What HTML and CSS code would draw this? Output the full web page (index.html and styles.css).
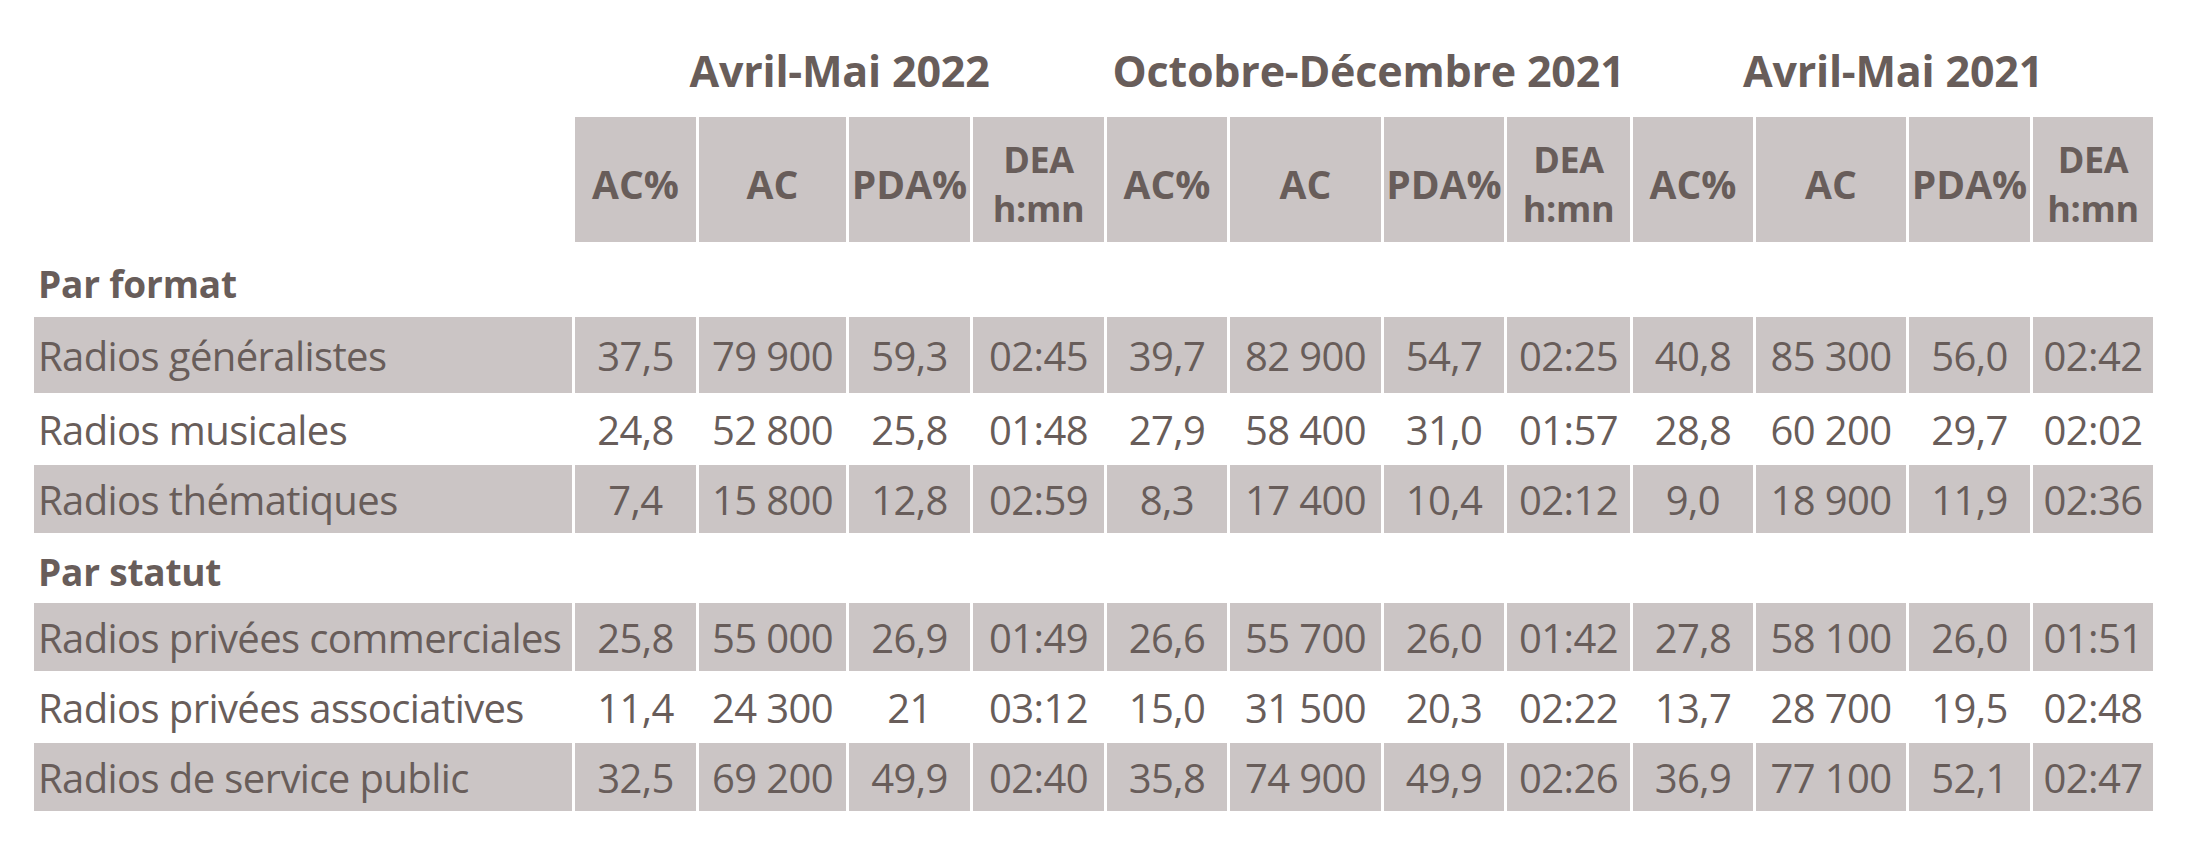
FILE: index.html
```html
<!DOCTYPE html>
<html lang="fr">
<head>
<meta charset="utf-8">
<title>Audience radio</title>
<link rel="stylesheet" href="styles.css">
</head>
<body>
<div class="sheet">
  <div class="row titles">
    <div class="lbl"></div>
    <div class="group">Avril-Mai 2022</div>
    <div class="group">Octobre-Décembre 2021</div>
    <div class="group">Avril-Mai 2021</div>
  </div>
  <div class="row head">
    <div class="blank"></div>
    <div class="hc">AC%</div><div class="hc">AC</div><div class="hc">PDA%</div><div class="hc two">DEA<br>h:mn</div>
    <div class="hc">AC%</div><div class="hc">AC</div><div class="hc">PDA%</div><div class="hc two">DEA<br>h:mn</div>
    <div class="hc">AC%</div><div class="hc">AC</div><div class="hc">PDA%</div><div class="hc two">DEA<br>h:mn</div>
  </div>
  <div class="section s1">Par format</div>
  <div class="row data shade tall">
    <div class="name">Radios généralistes</div>
    <div>37,5</div><div>79 900</div><div>59,3</div><div>02:45</div>
    <div>39,7</div><div>82 900</div><div>54,7</div><div>02:25</div>
    <div>40,8</div><div>85 300</div><div>56,0</div><div>02:42</div>
  </div>
  <div class="row data plain">
    <div class="name">Radios musicales</div>
    <div>24,8</div><div>52 800</div><div>25,8</div><div>01:48</div>
    <div>27,9</div><div>58 400</div><div>31,0</div><div>01:57</div>
    <div>28,8</div><div>60 200</div><div>29,7</div><div>02:02</div>
  </div>
  <div class="row data shade">
    <div class="name">Radios thématiques</div>
    <div>7,4</div><div>15 800</div><div>12,8</div><div>02:59</div>
    <div>8,3</div><div>17 400</div><div>10,4</div><div>02:12</div>
    <div>9,0</div><div>18 900</div><div>11,9</div><div>02:36</div>
  </div>
  <div class="section s2">Par statut</div>
  <div class="row data shade">
    <div class="name">Radios privées commerciales</div>
    <div>25,8</div><div>55 000</div><div>26,9</div><div>01:49</div>
    <div>26,6</div><div>55 700</div><div>26,0</div><div>01:42</div>
    <div>27,8</div><div>58 100</div><div>26,0</div><div>01:51</div>
  </div>
  <div class="row data plain">
    <div class="name">Radios privées associatives</div>
    <div>11,4</div><div>24 300</div><div>21</div><div>03:12</div>
    <div>15,0</div><div>31 500</div><div>20,3</div><div>02:22</div>
    <div>13,7</div><div>28 700</div><div>19,5</div><div>02:48</div>
  </div>
  <div class="row data shade">
    <div class="name">Radios de service public</div>
    <div>32,5</div><div>69 200</div><div>49,9</div><div>02:40</div>
    <div>35,8</div><div>74 900</div><div>49,9</div><div>02:26</div>
    <div>36,9</div><div>77 100</div><div>52,1</div><div>02:47</div>
  </div>
</div>
</body>
</html>
```

FILE: styles.css
```css
html, body {
  margin: 0;
  padding: 0;
  background: #ffffff;
}

body {
  font-family: "Open Sans", "Noto Sans", sans-serif;
  color: #685d5a;
}

.sheet {
  display: flex;
  flex-direction: column;
  gap: 3px;
  padding: 24px 0 0 34px;
  width: 2119px;
}

.row {
  display: grid;
  grid-template-columns: 538px 121px 147px 121px 131px 120px 151px 120px 123px 120px 150px 121px 120px;
  column-gap: 3px;
}

.titles {
  height: 90px;
}

.titles .group {
  grid-column: span 4;
  display: flex;
  align-items: flex-start;
  justify-content: center;
  font-weight: 700;
  font-size: 43px;
  line-height: 1;
  padding-top: 25px;
  letter-spacing: -0.2px;
  white-space: nowrap;
}

.head {
  height: 125px;
}

.hc {
  background: #cbc5c5;
  display: flex;
  align-items: center;
  justify-content: center;
  text-align: center;
  font-weight: 700;
  font-size: 39px;
  line-height: 47px;
  letter-spacing: 0;
  padding-top: 7px;
  box-sizing: border-box;
}

.hc.two {
  font-size: 36px;
  line-height: 49px;
  padding-top: 9px;
  letter-spacing: -0.3px;
}

.section {
  font-weight: 700;
  font-size: 37px;
  line-height: 1;
  display: flex;
  align-items: center;
  padding-left: 4px;
  letter-spacing: -0.2px;
  box-sizing: border-box;
}

.s1 {
  height: 69px;
  padding-top: 8px;
}

.s2 {
  height: 64px;
  padding-top: 7px;
}

.data {
  height: 68px;
  font-size: 40px;
  letter-spacing: -0.6px;
}

.data.tall {
  height: 76px;
}

.data.plain {
  height: 66px;
}

.data > div {
  display: flex;
  align-items: center;
  justify-content: center;
  white-space: nowrap;
}

.data > .name {
  justify-content: flex-start;
  padding-left: 4px;
}

.shade > div {
  background: #cbc5c5;
}
```
